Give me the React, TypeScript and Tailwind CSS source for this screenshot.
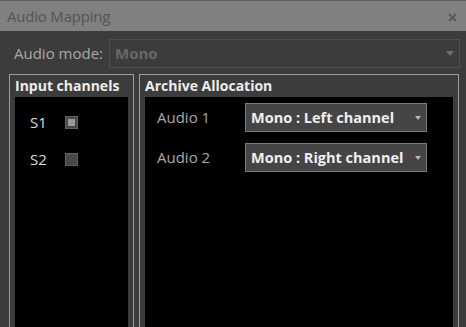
export default function App() {
  const channels = [
    { label: "S1", checked: true },
    { label: "S2", checked: false },
  ];
  const allocations = [
    { label: "Audio 1", value: "Mono : Left channel" },
    { label: "Audio 2", value: "Mono : Right channel" },
  ];

  return (
    <div className="w-[466px] h-[327px] overflow-hidden bg-[#3c3c3c] font-['Open_Sans',sans-serif] text-[14px] flex flex-col">
      {/* title bar */}
      <div className="h-[31px] shrink-0 bg-[#808080] border-t border-[#5c5c5c] flex items-center justify-between pl-[7px] pr-[9px]">
        <span className="text-[#545454] text-[15px] tracking-[-0.2px] mt-[1px]">Audio Mapping</span>
        <svg width="9" height="9" viewBox="0 0 9 9" className="mt-[2px]">
          <path d="M1 1L8 8M8 1L1 8" stroke="#575757" strokeWidth="1.8" />
        </svg>
      </div>

      {/* audio mode */}
      <div className="flex items-center mt-[8px] pl-[14px]">
        <span className="text-[#a8a8a8] text-[15px] w-[95px]">Audio mode:</span>
        <div className="w-[351px] h-[29px] border border-[#4e4e4e] flex items-center justify-between pl-[5px] pr-[5px]">
          <span className="text-[#686868] font-bold text-[15px]">Mono</span>
          <svg width="8" height="5" viewBox="0 0 8 5">
            <path d="M0 0H8L4 5Z" fill="#6e6e6e" />
          </svg>
        </div>
      </div>

      {/* panels */}
      <div className="flex mt-[6px] pl-[9px] gap-[5px] flex-1">
        <div className="w-[125px] border border-b-0 border-[#9c9c9c] flex flex-col px-[5px]">
          <div className="h-[22px] text-[#ececec] font-bold leading-[22px]">Input channels</div>
          <div className="flex-1 bg-black flex flex-col pt-[19px] gap-[24px]">
            {channels.map((c) => (
              <div key={c.label} className="flex items-center h-[13px]">
                <span className="text-[#dcdcdc] text-[15px] w-[50px] pl-[15px]">{c.label}</span>
                <div className="w-[13px] h-[13px] border border-[#626262] bg-[#484848] flex items-center justify-center">
                  {c.checked && <div className="w-[7px] h-[7px] bg-[#9a9a9a]" />}
                </div>
              </div>
            ))}
          </div>
        </div>

        <div className="w-[320px] border border-b-0 border-[#9c9c9c] flex flex-col px-[5px]">
          <div className="h-[22px] text-[#ececec] font-bold leading-[22px]">Archive Allocation</div>
          <div className="flex-1 bg-black flex flex-col pt-[6px] gap-[11px]">
            {allocations.map((a) => (
              <div key={a.label} className="flex items-center">
                <span className="text-[#a8a8a8] text-[15px] w-[100px] pl-[12px]">{a.label}</span>
                <div className="w-[182px] h-[29px] bg-[#454545] border border-[#7a7a7a] flex items-center justify-between pl-[5px] pr-[5px]">
                  <span className="text-[#f0f0f0] font-bold text-[14.5px]">{a.value}</span>
                  <svg width="6" height="4" viewBox="0 0 6 4">
                    <path d="M0 0H6L3 4Z" fill="#b8b8b8" />
                  </svg>
                </div>
              </div>
            ))}
          </div>
        </div>
      </div>
    </div>
  );
}
